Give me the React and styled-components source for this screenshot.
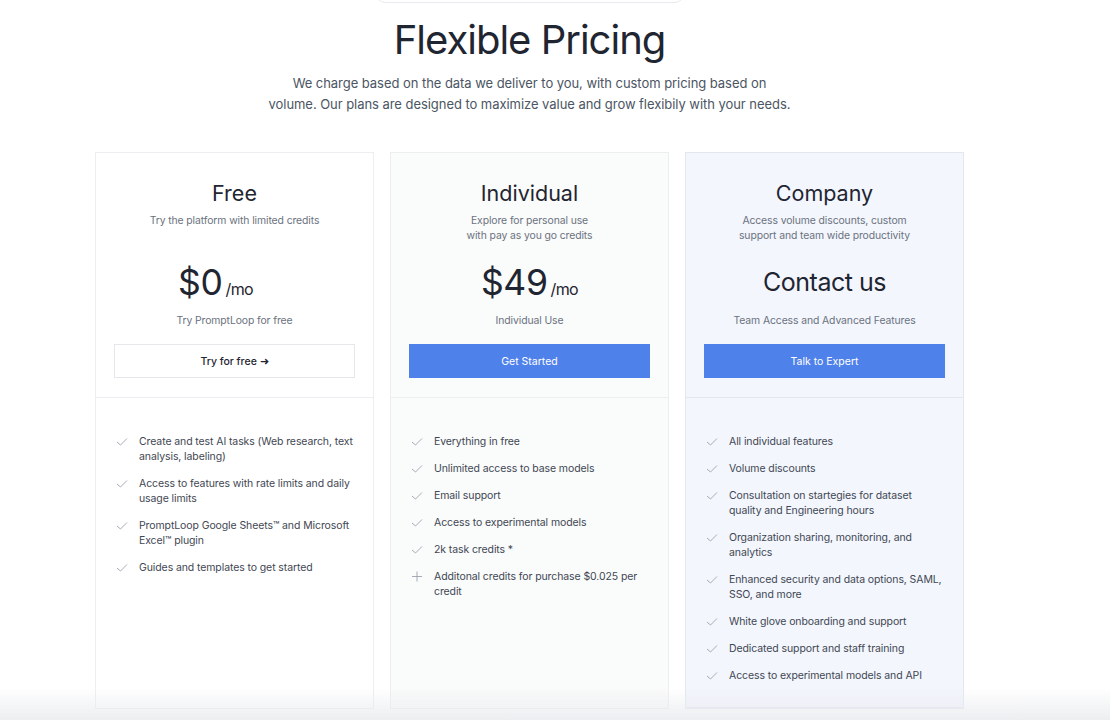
import styled, { createGlobalStyle } from "styled-components";

const GlobalStyle = createGlobalStyle`
  body {
    margin: 0;
    background: #ffffff;
    font-family: Inter, "Liberation Sans", sans-serif;
    color: #1f2937;
  }
`;

const plans = [
  {
    name: "Free",
    desc: ["Try the platform with limited credits"],
    price: "$0",
    per: "/mo",
    shift: 38,
    caption: "Try PromptLoop for free",
    cta: "Try for free ➜",
    variant: "outline",
    tone: "white",
    features: [
      { text: "Create and test AI tasks (Web research, text analysis, labeling)" },
      { text: "Access to features with rate limits and daily usage limits" },
      { text: "PromptLoop Google Sheets™ and Microsoft Excel™ plugin" },
      { text: "Guides and templates to get started" },
    ],
  },
  {
    name: "Individual",
    desc: ["Explore for personal use", "with pay as you go credits"],
    price: "$49",
    per: "/mo",
    caption: "Individual Use",
    cta: "Get Started",
    variant: "solid",
    tone: "gray",
    features: [
      { text: "Everything in free" },
      { text: "Unlimited access to base models" },
      { text: "Email support" },
      { text: "Access to experimental models" },
      { text: "2k task credits *" },
      { text: "Additonal credits for purchase $0.025 per credit", plus: true },
    ],
  },
  {
    name: "Company",
    desc: ["Access volume discounts, custom", "support and team wide productivity"],
    price: "Contact us",
    small: true,
    caption: "Team Access and Advanced Features",
    cta: "Talk to Expert",
    variant: "solid",
    tone: "blue",
    features: [
      { text: "All individual features" },
      { text: "Volume discounts" },
      { text: "Consultation on startegies for dataset quality and Engineering hours" },
      { text: "Organization sharing, monitoring, and analytics" },
      { text: "Enhanced security and data options, SAML, SSO, and more" },
      { text: "White glove onboarding and support" },
      { text: "Dedicated support and staff training" },
      { text: "Access to experimental models and API" },
    ],
  },
];

const tones = {
  white: { bg: "#ffffff", border: "#eceef1" },
  gray: { bg: "#fafbfb", border: "#eceef0" },
  blue: { bg: "#f3f6fd", border: "#e3e8f0" },
};

const Page = styled.div`
  width: 1059px;
  display: flex;
  flex-direction: column;
  align-items: center;
`;

const Pill = styled.div`
  width: 312px;
  height: 32px;
  margin-top: -29px;
  border: 1px solid #e8eaed;
  border-radius: 12px;
  box-sizing: border-box;
`;

const Title = styled.h1`
  margin: 11px 0 0;
  font-size: 40px;
  line-height: 52px;
  font-weight: 400;
  letter-spacing: -0.025em;
  color: #1f2531;
`;

const Subtitle = styled.p`
  margin: 7px 0 0;
  text-align: center;
  font-size: 13px;
  line-height: 21px;
  letter-spacing: -0.05px;
  color: #4b5563;
`;

const Grid = styled.div`
  margin-top: 37px;
  display: grid;
  grid-template-columns: repeat(3, 279px);
  gap: 16px;
`;

const Card = styled.div`
  display: flex;
  flex-direction: column;
  background: ${(p) => tones[p.$tone].bg};
  border: 1px solid ${(p) => tones[p.$tone].border};
  border-bottom-width: ${(p) => (p.$tone === "blue" ? "2px" : "1px")};
`;

const Head = styled.div`
  display: flex;
  flex-direction: column;
  align-items: center;
  padding: 25px 18px 19px;
  border-bottom: 1px solid ${(p) => tones[p.$tone].border};
`;

const PlanName = styled.h2`
  margin: 0;
  font-size: 21.5px;
  line-height: 30px;
  font-weight: 400;
  color: #1f2531;
`;

const Desc = styled.p`
  margin: 5px 0 0;
  min-height: 30px;
  text-align: center;
  font-size: 10.4px;
  line-height: 15px;
  letter-spacing: -0.1px;
  color: #6b7280;
`;

const PriceRow = styled.div`
  margin-top: 18px;
  margin-right: ${(p) => p.$shift || 0}px;
  height: 44px;
  display: flex;
  align-items: ${(p) => (p.$small ? "center" : "baseline")};
  padding-bottom: ${(p) => (p.$small ? "3px" : "0")};
  box-sizing: border-box;
  gap: 3px;
  color: #1f2531;
`;

const Amount = styled.span`
  font-size: ${(p) => (p.$small ? "25px" : "35.5px")};
  line-height: ${(p) => (p.$small ? "30px" : "44px")};
  letter-spacing: ${(p) => (p.$small ? "-0.02em" : "-0.01em")};
`;

const Per = styled.span`
  font-size: 16px;
  letter-spacing: -0.04em;
`;

const Caption = styled.p`
  margin: 8px 0 0;
  font-size: 10.4px;
  line-height: 15px;
  letter-spacing: -0.1px;
  color: #6b7280;
`;

const Button = styled.button`
  margin-top: 16px;
  width: 100%;
  height: 34px;
  font-family: inherit;
  font-size: 10.5px;
  font-weight: ${(p) => (p.$variant === "solid" ? 400 : 500)};
  cursor: pointer;
  border: 1px solid ${(p) => (p.$variant === "solid" ? "#4f81ea" : "#e5e7eb")};
  background: ${(p) => (p.$variant === "solid" ? "#4f81ea" : "#ffffff")};
  color: ${(p) => (p.$variant === "solid" ? "#ffffff" : "#1f2531")};
`;

const List = styled.ul`
  list-style: none;
  margin: 0;
  padding: 36px 18px 24px 20px;
  display: flex;
  flex-direction: column;
  gap: 12px;
`;

const Item = styled.li`
  display: flex;
  gap: 11px;
  font-size: 10.5px;
  line-height: 15px;
  letter-spacing: -0.1px;
  color: #3f4753;
`;

const Icon = styled.svg`
  flex: none;
  width: 12px;
  height: 15px;
`;

const Fade = styled.div`
  position: fixed;
  left: 0;
  right: 0;
  bottom: 0;
  height: 32px;
  pointer-events: none;
  background: linear-gradient(rgba(236, 238, 241, 0), rgba(233, 235, 238, 0.85));
`;

const Check = () => (
  <Icon viewBox="0 0 12 15">
    <polyline points="1,8 4.5,11 11,4.5" fill="none" stroke="#9ca3af" strokeWidth="0.9" />
  </Icon>
);

const Plus = () => (
  <Icon viewBox="0 0 12 15">
    <path d="M6 2.5v10M1 7.5h10" fill="none" stroke="#9ca3af" strokeWidth="0.9" />
  </Icon>
);

const PlanCard = ({ plan }) => (
  <Card $tone={plan.tone}>
    <Head $tone={plan.tone}>
      <PlanName>{plan.name}</PlanName>
      <Desc>
        {plan.desc.map((line) => (
          <span key={line}>
            {line}
            <br />
          </span>
        ))}
      </Desc>
      <PriceRow $shift={plan.shift} $small={plan.small}>
        <Amount $small={plan.small}>{plan.price}</Amount>
        {plan.per && <Per>{plan.per}</Per>}
      </PriceRow>
      <Caption>{plan.caption}</Caption>
      <Button $variant={plan.variant}>{plan.cta}</Button>
    </Head>
    <List>
      {plan.features.map((f) => (
        <Item key={f.text}>
          {f.plus ? <Plus /> : <Check />}
          <span>{f.text}</span>
        </Item>
      ))}
    </List>
  </Card>
);

export default function App() {
  return (
    <>
      <GlobalStyle />
      <Page>
        <Pill />
        <Title>Flexible Pricing</Title>
        <Subtitle>
          We charge based on the data we deliver to you, with custom pricing based on
          <br />
          volume. Our plans are designed to maximize value and grow flexibily with your needs.
        </Subtitle>
        <Grid>
          {plans.map((p) => (
            <PlanCard key={p.name} plan={p} />
          ))}
        </Grid>
      </Page>
      <Fade />
    </>
  );
}
